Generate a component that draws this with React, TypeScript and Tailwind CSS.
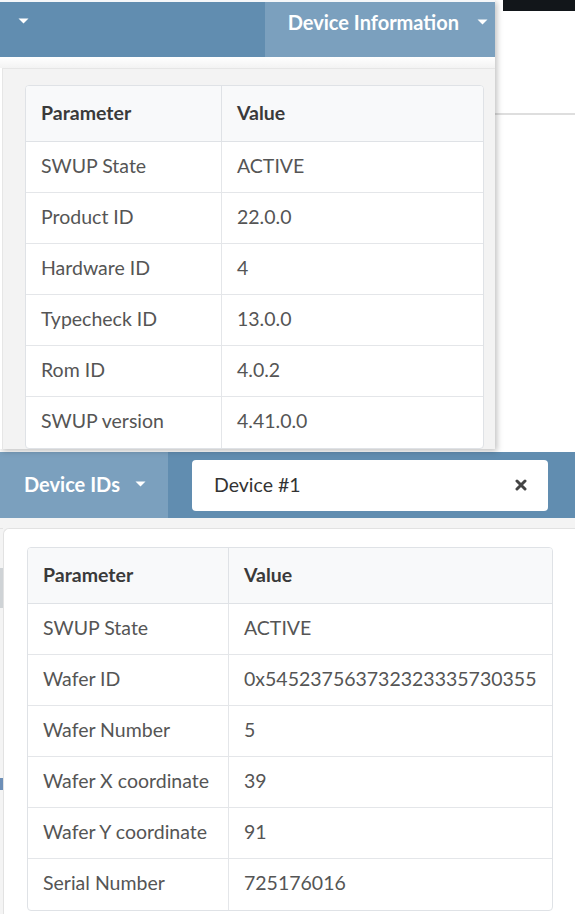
import React from "react";

const font = { fontFamily: "Lato, 'Noto Sans', sans-serif" };

function Caret() {
  return (
    <svg width="11" height="6" viewBox="0 0 11 6" className="inline-block">
      <path d="M0.5 0.5 L10.5 0.5 L5.5 5.5 Z" fill="#ffffff" />
    </svg>
  );
}

type Row = [string, string];

function DataTable({ rows, col1 }: { rows: Row[]; col1: string }) {
  return (
    <div className="rounded-[4px] border border-[#dfe2e6] bg-white overflow-hidden">
      <div className="flex h-[56px] items-center bg-[#f8f9fa] border-b border-[#dfe2e6] text-[19.5px] font-bold text-[#3a3a3a]">
        <div className={`${col1} h-full flex items-center pl-[15px] pb-[2px] border-r border-[#dfe2e6]`}>Parameter</div>
        <div className="flex-1 h-full flex items-center pl-[15px] pb-[2px]">Value</div>
      </div>
      {rows.map(([k, v], i) => (
        <div
          key={k}
          className={`flex h-[51px] items-center text-[19.5px] text-[#555555] ${i < rows.length - 1 ? "border-b border-[#e4e6e9]" : ""}`}
        >
          <div className={`${col1} h-full flex items-center pl-[15px] pb-[3px] border-r border-[#e4e6e9]`}>{k}</div>
          <div className="flex-1 h-full flex items-center pl-[15px] pb-[3px]">{v}</div>
        </div>
      ))}
    </div>
  );
}

export default function App() {
  const top: Row[] = [
    ["SWUP State", "ACTIVE"],
    ["Product ID", "22.0.0"],
    ["Hardware ID", "4"],
    ["Typecheck ID", "13.0.0"],
    ["Rom ID", "4.0.2"],
    ["SWUP version", "4.41.0.0"],
  ];
  const bottom: Row[] = [
    ["SWUP State", "ACTIVE"],
    ["Wafer ID", "0x545237563732323335730355"],
    ["Wafer Number", "5"],
    ["Wafer X coordinate", "39"],
    ["Wafer Y coordinate", "91"],
    ["Serial Number", "725176016"],
  ];

  return (
    <div className="w-[575px] h-[914px] overflow-hidden bg-white flex flex-col" style={font}>
      {/* top section */}
      <div className="h-[450px] flex">
        <div className="w-[495px] h-[449px] flex flex-col bg-white shadow-[2px_2px_6px_rgba(0,0,0,0.25)] relative z-10">
          <div className="h-[2px] bg-[#f5f7f9]" />
          <div className="h-[55px] flex">
            <div className="w-[265px] bg-[#618db0] pl-[18px] pt-[7px]">
              <div className="h-[24px] flex items-center">
                <Caret />
              </div>
            </div>
            <div className="flex-1 bg-[#7ba0be] flex items-start justify-end pr-[7px] pt-[6px]">
              <div className="h-[28px] flex items-center gap-[18px]">
                <span className="text-[20px] font-bold text-white">Device Information</span>
                <Caret />
              </div>
            </div>
          </div>
          <div className="h-[11px] bg-gradient-to-b from-white to-[#f3f3f3]" />
          <div className="flex-1 bg-[#f3f3f3] border-t border-l border-[#e6e6e6] ml-[2px] pl-[22px] pr-[11px] pt-[16px]">
            <DataTable rows={top} col1="w-[196px]" />
          </div>
        </div>
        <div className="flex-1 flex flex-col">
          <div className="h-[11px] ml-[8px] bg-[#12161a]" />
          <div className="h-[102px]" />
          <div className="h-[2px] bg-[#dedede]" />
        </div>
      </div>

      {/* bottom section */}
      <div className="h-[2px]" />
      <div className="h-[66px] flex bg-[#618db0]">
        <div className="w-[168px] bg-[#7ba0be] pl-[24px] pb-[2px] flex items-center gap-[15px]">
          <span className="text-[20px] font-bold text-white">Device IDs</span>
          <Caret />
        </div>
        <div className="flex-1 pl-[24px] pr-[27px] pt-[8px] pb-[7px]">
          <div className="h-[51px] rounded-[4px] bg-white flex items-center pl-[22px] pr-[21px] pb-[2px] justify-between">
            <span className="text-[19.5px] text-[#333333]">Device #1</span>
            <svg width="12" height="12" viewBox="0 0 12 12">
              <path d="M2 2 L10 10 M10 2 L2 10" stroke="#444444" strokeWidth="3" strokeLinecap="round" />
            </svg>
          </div>
        </div>
      </div>
      <div className="flex-1 flex bg-[#f4f4f4]">
        <div className="w-[3px] flex flex-col">
          <div className="h-[10px]" />
          <div className="h-[40px] border-t border-[#e2e2e2]" />
          <div className="h-[40px] bg-[#cfd3d6]" />
          <div className="h-[170px]" />
          <div className="h-[12px] bg-[#6d8fb7]" />
        </div>
        <div className="flex-1 flex flex-col pt-[10px]">
          <div className="flex-1 bg-white border-t border-l border-[#e2e2e2] rounded-tl-[6px] pl-[23px] pr-[22px] pt-[18px]">
            <DataTable rows={bottom} col1="w-[201px]" />
          </div>
        </div>
      </div>
    </div>
  );
}
